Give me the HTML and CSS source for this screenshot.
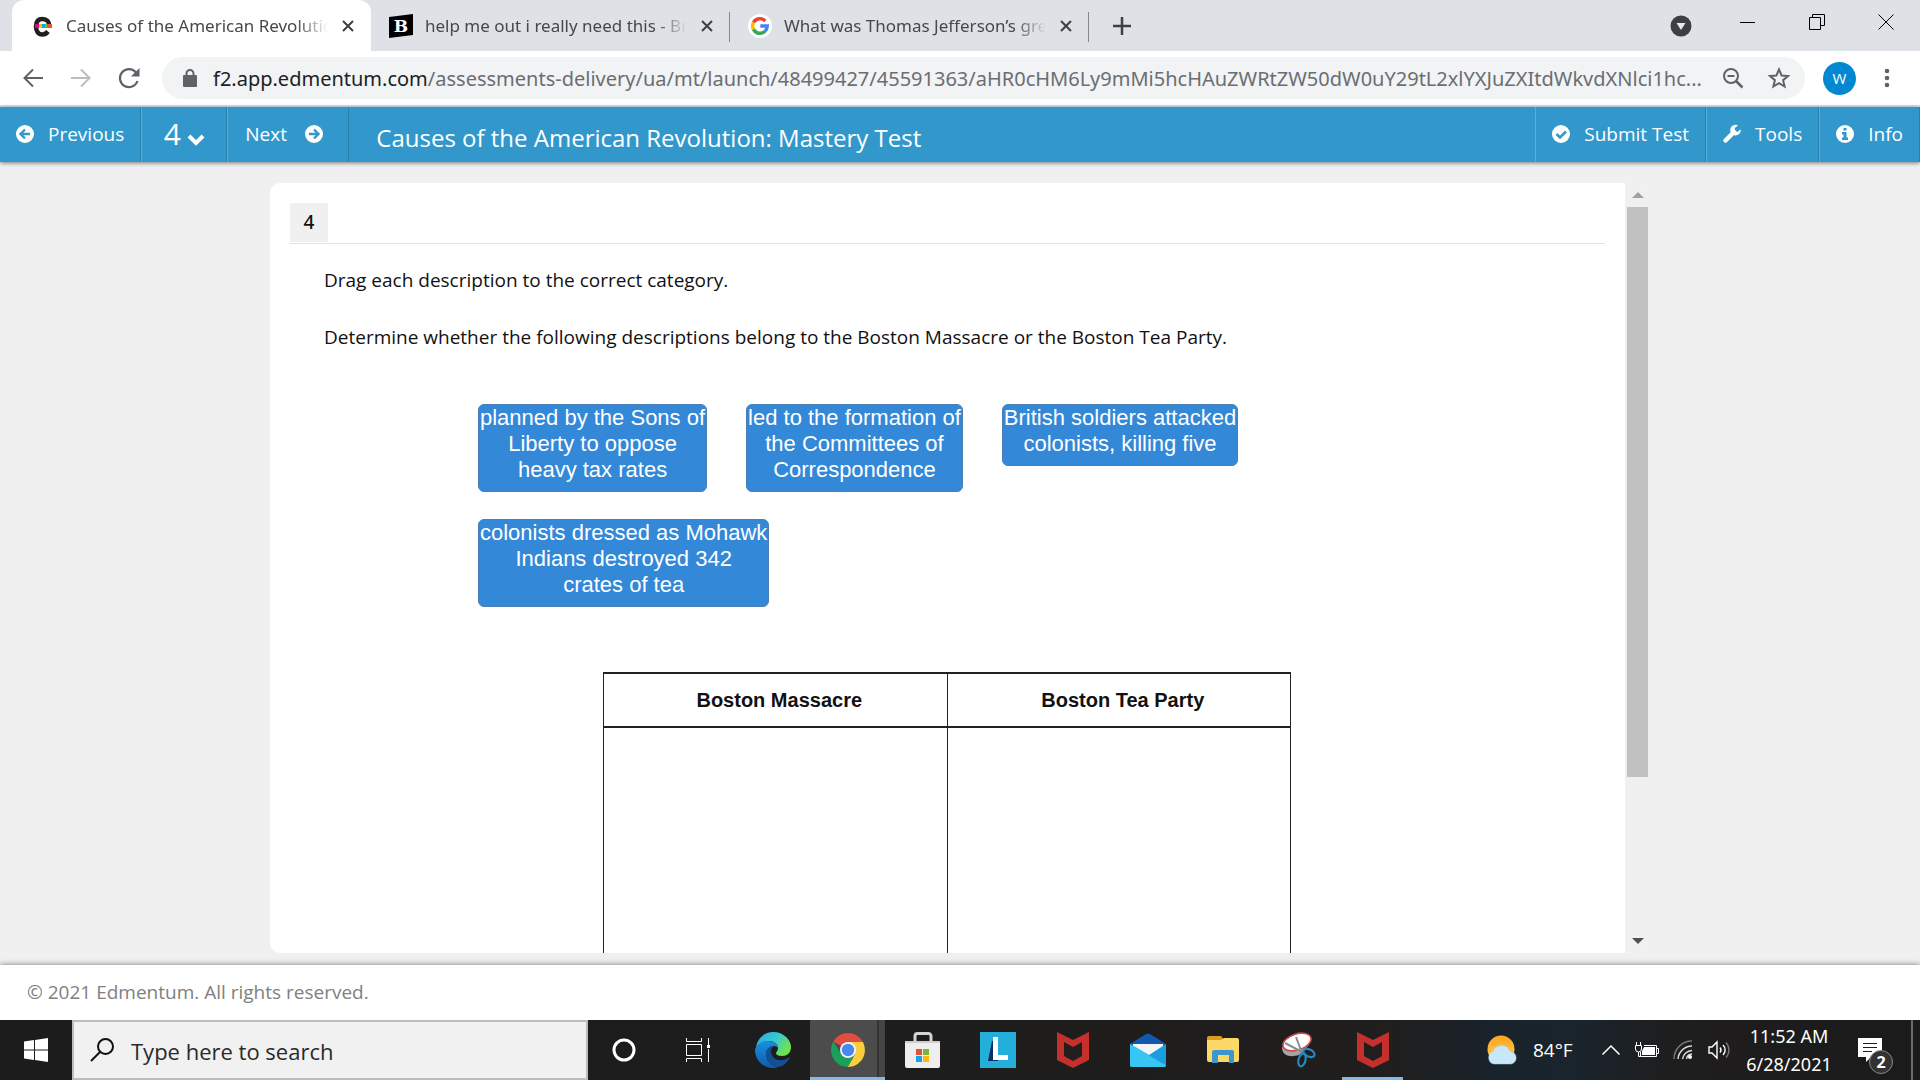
FILE: index.html
```html
<!DOCTYPE html>
<html lang="en">
<head>
<meta charset="utf-8">
<title>Causes of the American Revolution: Mastery Test</title>
<link rel="stylesheet" href="styles.css">
</head>
<body>
<svg class="defs" aria-hidden="true">
  <symbol id="x" viewBox="0 0 14 14"><path d="M2 2l10 10M12 2L2 12" fill="none" stroke="#3c4043" stroke-width="2"/></symbol>
  <symbol id="shield" viewBox="0 0 32 36"><path fill="#c6302c" d="M0 0l16 8L32 0v28l-16 8L0 28z"/><path fill="#221e1e" d="M7 10l9 5 9-5v14l-9 5-9-5z"/></symbol>
</svg>

<div class="tabs">
  <div class="tab active">
    <svg class="fav" viewBox="0 0 24 24"><path d="M18 17.500C16 20 14 20.500 12.500 20.500 8 20.500 6 17 6 12.500S8 5 12.500 5s6.500 3 6.500 6" fill="none" stroke="#231f20" stroke-width="4.500"/><path fill="#e6007e" d="M5 10h4v4H5z"/><path fill="#ffc20e" d="M9 10h3v4H9z"/><path fill="#00a9e0" d="M12 10h3v4h-3z"/><path fill="#76b82a" d="M15 10h2v4h-2z"/><path fill="#f04e37" d="M17 10h5v4h-5z"/></svg>
    <span class="tab-title">Causes of the American Revolution</span>
    <button class="close" aria-label="Close tab"><svg><use href="#x"/></svg></button>
  </div>
  <div class="tab">
    <svg class="fav" viewBox="0 0 24 24"><path d="M0 3l24-3v21L0 24z"/><text x="12" y="18" text-anchor="middle" class="fav-b">B</text></svg>
    <span class="tab-title">help me out i really need this - Brainly</span>
    <button class="close" aria-label="Close tab"><svg><use href="#x"/></svg></button>
  </div>
  <div class="tab">
    <svg class="fav" viewBox="0 0 24 24"><circle cx="12" cy="12" r="12" fill="#fff"/><g fill="none" stroke-width="3.400"><path stroke="#ea4335" d="M5.500 8.500A7.300 7.300 0 0 1 17.300 7"/><path stroke="#fbbc05" d="M5.500 15.500a7.300 7.300 0 0 1 0-7"/><path stroke="#34a853" d="M17 17.300A7.300 7.300 0 0 1 5.500 15.400"/><path stroke="#4285f4" d="M12.300 12h7a7.300 7.300 0 0 1-2.400 5.300"/></g></svg>
    <span class="tab-title">What was Thomas Jefferson’s great</span>
    <button class="close" aria-label="Close tab"><svg><use href="#x"/></svg></button>
  </div>
  <button class="new-tab" aria-label="New tab"><svg viewBox="0 0 18 18"><path d="M9 0v18M0 9h18" stroke="#3c4043" stroke-width="2.500"/></svg></button>
  <div class="window-buttons">
    <button aria-label="Search tabs"><svg width="22" height="22" viewBox="0 0 22 22" class="low"><circle cx="11" cy="11" r="10.500" fill="#3c4043"/><path fill="#e8eaed" d="M6.500 8h9L11 15z"/></svg></button>
    <button aria-label="Minimize"><svg width="16" height="16"><path d="M0 8.500h15" stroke="#000"/></svg></button>
    <button aria-label="Restore"><svg width="16" height="16" fill="none" stroke="#000"><path d="M.5 3.500h11v12H.5zM3.500 3V.5h12v11H12"/></svg></button>
    <button aria-label="Close"><svg width="16" height="16"><path d="M.5.5l15 15M15.500.5l-15 15" stroke="#000"/></svg></button>
  </div>
</div>

<div class="toolbar">
  <button class="nav" aria-label="Back"><svg viewBox="0 0 20 20"><path d="M20 10H2M10 1.500L1.500 10l8.500 8.500" fill="none" stroke="#5f6368" stroke-width="2"/></svg></button>
  <button class="nav" aria-label="Forward"><svg viewBox="0 0 20 20"><path d="M0 10h18M10 1.500l8.500 8.500-8.500 8.500" fill="none" stroke="#babcbe" stroke-width="2"/></svg></button>
  <button class="nav" aria-label="Reload"><svg viewBox="0 0 20 20"><path d="M18.500 13A9 9 0 1 1 17 4.500" fill="none" stroke="#5f6368" stroke-width="2.200"/><path fill="#5f6368" d="M20.500 0v8.500H12z"/></svg></button>
  <div class="omnibox">
    <svg width="14" height="18" viewBox="0 0 14 18"><path fill="#5f6368" d="M1 6h12a1 1 0 0 1 1 1v10a1 1 0 0 1-1 1H1a1 1 0 0 1-1-1V7a1 1 0 0 1 1-1z"/><path d="M3.500 7V4.500a3.500 3.500 0 0 1 7 0V7" fill="none" stroke="#5f6368" stroke-width="2"/></svg>
    <span class="url"><b>f2.app.edmentum.com</b>/assessments-delivery/ua/mt/launch/48499427/45591363/aHR0cHM6Ly9mMi5hcHAuZWRtZW50dW0uY29tL2xlYXJuZXItdWkvdXNlci1hc...</span>
    <button aria-label="Zoom"><svg width="22" height="22" fill="none" stroke="#5f6368" stroke-width="2"><circle cx="9" cy="9" r="7"/><path d="M5.500 9h7"/><path d="M14 14l6.500 6.500" stroke-width="2.500"/></svg></button>
    <button aria-label="Bookmark"><svg width="22" height="22" viewBox="0 0 22 22"><path d="M11 2.500l2.600 6 6.400.5-4.900 4.200 1.500 6.300L11 16.200l-5.600 3.300 1.500-6.300L2 9l6.400-.5z" fill="none" stroke="#5f6368" stroke-width="2"/></svg></button>
  </div>
  <button class="avatar">W</button>
  <button class="menu" aria-label="Menu"><svg width="6" height="20" fill="#5f6368"><circle cx="3" cy="3" r="2.300"/><circle cx="3" cy="10" r="2.300"/><circle cx="3" cy="17" r="2.300"/></svg></button>
</div>

<header class="bar">
  <button class="item"><svg class="ic" viewBox="0 0 18 18"><circle cx="9" cy="9" r="9" fill="#fff"/><path d="M14 9H5M9 4.500L4.500 9 9 13.500" fill="none" stroke="#3298cc" stroke-width="2.400"/></svg>Previous</button>
  <button class="item number">4<svg width="18" height="12" viewBox="0 0 18 12"><path d="M2 2l7 7 7-7" fill="none" stroke="#fff" stroke-width="4"/></svg></button>
  <button class="item next">Next<svg class="ic" viewBox="0 0 18 18"><circle cx="9" cy="9" r="9" fill="#fff"/><path d="M4 9h9M9 4.500L13.500 9 9 13.500" fill="none" stroke="#3298cc" stroke-width="2.400"/></svg></button>
  <h1>Causes of the American Revolution: Mastery Test</h1>
  <button class="item"><svg class="ic" viewBox="0 0 18 18"><circle cx="9" cy="9" r="9" fill="#fff"/><path d="M4.500 9l3.500 3.500 6-6" fill="none" stroke="#3298cc" stroke-width="2.600"/></svg>Submit Test</button>
  <button class="item"><svg class="ic" viewBox="0 0 18 18"><path d="M2.500 15.500L11 7" stroke="#fff" stroke-width="4.500" stroke-linecap="round"/><path fill="#fff" d="M15 .5L11.800 3v2.800l2.600 1.200L17.700 4.300A5.300 5.300 0 1 1 15 .5z"/></svg>Tools</button>
  <button class="item"><svg class="ic" viewBox="0 0 18 18"><circle cx="9" cy="9" r="9" fill="#fff"/><path fill="#3298cc" d="M7.500 3h3v2.500h-3zM6 7h4.500v5.500H12V15H6v-2.500h1.500v-3H6z"/></svg>Info</button>
</header>

<main class="stage">
  <div class="card">
    <section class="question">
      <div class="q-head"><span class="q-number">4</span></div>
      <div class="q-text">
        <p>Drag each description to the correct category.</p>
        <p>Determine whether the following descriptions belong to the Boston Massacre or the Boston Tea Party.</p>
      </div>
      <div class="tiles">
        <button class="tile">planned by the Sons of<br>Liberty to oppose<br>heavy tax rates</button>
        <button class="tile">led to the formation of<br>the Committees of<br>Correspondence</button>
        <button class="tile">British soldiers attacked<br>colonists, killing five</button>
        <button class="tile">colonists dressed as Mohawk<br>Indians destroyed 342<br>crates of tea</button>
      </div>
      <table class="categories">
        <thead><tr><th scope="col">Boston Massacre</th><th scope="col">Boston Tea Party</th></tr></thead>
        <tbody><tr><td></td><td></td></tr></tbody>
      </table>
    </section>
    <div class="scrollbar">
      <svg width="12" height="6"><path fill="#a0a0a0" d="M0 6l6-6 6 6z"/></svg>
      <div class="track"><div class="thumb"></div></div>
      <svg width="12" height="6"><path fill="#505050" d="M0 0h12L6 6z"/></svg>
    </div>
  </div>
</main>

<footer class="foot">© 2021 Edmentum. All rights reserved.</footer>

<div class="taskbar">
  <button class="start" aria-label="Start"><svg width="24" height="24" fill="#fff"><path d="M0 3.500l10-1.400v9.400H0zM11 2l13-2v11.500H11zM0 12.500h10v9.400L0 20.500zM11 12.500h13V24l-13-2z"/></svg></button>
  <label class="search">
    <svg width="24" height="24" fill="none" stroke="#111" stroke-width="2"><circle cx="15.500" cy="8.500" r="7.500"/><path d="M10 14L1 23"/></svg>
    <input type="text" placeholder="Type here to search" aria-label="Type here to search">
  </label>
  <button class="app narrow" aria-label="Cortana"><svg width="24" height="24"><circle cx="12" cy="12" r="10" fill="none" stroke="#fff" stroke-width="3"/></svg></button>
  <button class="app" aria-label="Task view"><svg width="26" height="24" fill="none" stroke="#fff"><path d="M1.500 6.500h15v11h-15zM1.500 0v3.500h15V0M1.500 24v-3.500h15V24M23.500 0v7M23.500 11v13"/><path d="M22 7h3v3h-3z" fill="#fff" stroke="none"/></svg></button>
  <button class="app" aria-label="Edge"><svg width="36" height="36" viewBox="0 0 36 36"><defs><linearGradient id="eg" x1="0" y1="0" x2="1" y2=".5"><stop offset="0" stop-color="#2aa9dd"/><stop offset=".55" stop-color="#35c8d5"/><stop offset="1" stop-color="#6fe34e"/></linearGradient><linearGradient id="eb" x1="0" y1="0" x2="0" y2="1"><stop offset="0" stop-color="#1d8fe0"/><stop offset="1" stop-color="#0d5cab"/></linearGradient></defs><path fill="url(#eg)" d="M1 16C2 6 10 0 18 0c11 0 18 8 18 15 0 6-4 9-9 9-4 0-6-1-6-3 0-1 2-2 2-5 0-4-4-7-9-7C8 9 3 12 1 16z"/><path fill="url(#eb)" d="M0 18C1 12 7 9 13 9c6 0 10 3 10 7 0-1-2-2-4-2-6 0-9 6-7 11 1 6 6 10 11 10-2 1-4 1-5 1C8 36 0 28 0 18z"/><path fill="#134f94" d="M19 14c-4 3-4 8 0 12 4 3 10 3 14 0 2-1 2 0 1 1-3 5-7 8-12 8-6-1-10-5-11-10-1-6 3-11 8-11z"/></svg></button>
  <button class="app open current" aria-label="Chrome"><svg width="34" height="34" viewBox="0 0 34 34"><path fill="#e14b40" d="M17 17L2.300 8.500A17 17 0 0 1 31.700 8.500L32 10H17z"/><path fill="#fccd3c" d="M17 9h14.900A17 17 0 0 1 16.500 34l7.500-13z"/><path fill="#1aa05a" d="M2.300 8.500L11 22l6 3h5l-5.200 9A17 17 0 0 1 2.300 8.500z"/><circle cx="17" cy="17" r="8" fill="#f3f6fb"/><circle cx="17" cy="17" r="6.200" fill="#4a87ee"/></svg></button>
  <button class="app" aria-label="Store"><svg width="36" height="36" viewBox="0 0 36 36"><path d="M10 10V4a2.500 2.500 0 0 1 2.500-2.500h11A2.500 2.500 0 0 1 26 4v6" fill="none" stroke="#d4d4d4" stroke-width="3"/><path fill="#eee" d="M0 9h35v25a2 2 0 0 1-2 2H2a2 2 0 0 1-2-2z"/><path fill="#cfcfcf" d="M0 9h35v2H0z"/><path fill="#e5502e" d="M11 17h6v6h-6z"/><path fill="#7fb239" d="M18 17h6v6h-6z"/><path fill="#16a3e6" d="M11 24h6v6h-6z"/><path fill="#fdb813" d="M18 24h6v6h-6z"/></svg></button>
  <button class="app" aria-label="Lenovo Vantage"><svg width="36" height="36"><path fill="#24afdb" d="M0 0h36v36H0z"/><path fill="#0b2f63" d="M12 9l-4 20h10V9z"/><path fill="#fff" d="M13 5h5v18h10v5H13z"/></svg></button>
  <button class="app" aria-label="McAfee"><svg width="32" height="36"><use href="#shield"/></svg></button>
  <button class="app" aria-label="Mail"><svg width="36" height="34"><path fill="#1059ae" d="M0 11L16 1q2-1 4 0l16 10v8H0z"/><path fill="#f4f5fb" d="M3 11h30v8L18 24 3 19z"/><path fill="#1b9de2" d="M0 11v21a2 2 0 0 0 2 2h32a2 2 0 0 0 2-2V11L19 22z"/><path fill="#37c5f3" d="M0 11l36 21.500q-.5 1.500-2 1.500H2a2 2 0 0 1-2-2z"/></svg></button>
  <button class="app" aria-label="File Explorer"><svg width="32" height="28"><path fill="#d6a01c" d="M0 2a2 2 0 0 1 2-2h12l3 4H0z"/><path fill="#fcd866" d="M0 4h14l3-2h13a2 2 0 0 1 2 2v20a2 2 0 0 1-2 2H2a2 2 0 0 1-2-2z"/><path fill="#3d97cf" d="M5 27V16a2 2 0 0 1 2-2h18a2 2 0 0 1 2 2v11h-5v-8H11v8z"/></svg></button>
  <button class="app" aria-label="Snipping Tool"><svg width="34" height="36" viewBox="0 0 34 36"><path fill="#a5a5a8" d="M1 15c0 8 6 11 17 8l10-10z"/><ellipse cx="16" cy="10" rx="14.500" ry="8" transform="rotate(-18 16 10)" fill="#fff" stroke="#c94b50" stroke-width="1.600"/><path d="M15 5l6 16M4 11l17 9" stroke="#888e94" stroke-width="2"/><g fill="none" stroke="#2489bd" stroke-width="2.200"><ellipse cx="28" cy="21" rx="6" ry="3.500" transform="rotate(25 28 21)"/><ellipse cx="21" cy="28" rx="3.500" ry="6.500" transform="rotate(15 21 28)"/></g></svg></button>
  <button class="app open" aria-label="McAfee window"><svg width="32" height="36"><use href="#shield"/></svg></button>
  <div class="tray">
    <button class="weather"><svg width="30" height="30" viewBox="0 0 30 30"><defs><linearGradient id="sun" x1="0" y1="0" x2="0" y2="1"><stop offset="0" stop-color="#ffa31c"/><stop offset="1" stop-color="#ffd15a"/></linearGradient></defs><circle cx="14" cy="14" r="13.500" fill="url(#sun)"/><path fill="#c8e7f8" stroke="#a5cfe8" stroke-width=".5" d="M7 29a6.500 6.500 0 0 1-1-12.500 9 9 0 0 1 17 0A6.300 6.300 0 0 1 24 29z"/></svg>84°F</button>
    <button aria-label="Show hidden icons"><svg width="18" height="10"><path d="M.5 9.500L9 1l8.500 8.500" fill="none" stroke="#fff" stroke-width="1.500"/></svg></button>
    <button aria-label="Battery"><svg width="24" height="16"><path fill="none" stroke="#fff" d="M9 3.500h12.500v11h-16V10M22 6.500h1.500v5H22"/><path fill="#fff" d="M9 5h11v8H7V9z"/><path d="M1.500 0v3M5.500 0v3M.5 3.500h6V7a3 3 0 0 1-6 0zM3.500 10v4.500h2" fill="none" stroke="#fff"/></svg></button>
    <button aria-label="Network"><svg width="20" height="20" fill="none" stroke-width="1.500"><path stroke="#777" d="M1 19A18 18 0 0 1 19 1"/><path stroke="#ddd" d="M5 19A14 14 0 0 1 19 6M9.500 19A10 10 0 0 1 19 10.500M13.500 19a6 6 0 0 1 5.500-5"/><circle cx="17" cy="17" r="2" fill="#fff"/></svg></button>
    <button aria-label="Volume"><svg width="22" height="18" fill="none" stroke="#fff" stroke-width="1.400"><path d="M1 6h3l5-5v16l-5-5H1zM12 6.500a4 4 0 0 1 0 5M15 4a7 7 0 0 1 0 10"/><path stroke="#777" d="M18 1.500a11 11 0 0 1 0 15"/></svg></button>
    <button class="clock"><span>11:52 AM</span><span>6/28/2021</span></button>
    <button class="notes" aria-label="Notifications, 2 new"><svg width="24" height="24"><path fill="#fff" d="M0 0h24v19H13l-5 5v-5H0z"/><path d="M5 5.500h14M5 9.500h14M5 13.500h9" stroke="#1d1d1d"/></svg><span class="count">2</span></button>
  </div>
</div>
</body>
</html>
```
FILE: styles.css
```css
* { box-sizing: border-box; }
body {
  margin: 0;
  height: 100vh;
  display: flex;
  flex-direction: column;
  overflow: hidden;
  background: #f0f0f0;
  font-family: "Open Sans", "Noto Sans", sans-serif;
  font-size: 19px;
  color: #111;
}
button {
  margin: 0;
  padding: 0;
  border: 0;
  background: none;
  color: inherit;
  font: inherit;
  display: flex;
  align-items: center;
  justify-content: center;
}
svg { display: block; flex: none; overflow: visible; }
.defs { position: absolute; width: 0; height: 0; }

/* Browser tabs */
.tabs { display: flex; flex: none; height: 51px; background: #dee1e6; padding-left: 12px; }
.tab {
  display: flex;
  align-items: center;
  width: 359px;
  padding: 0 16px 0 18px;
  font-family: "Noto Sans", sans-serif;
  font-size: 17px;
  color: #45494d;
}
.tab.active { background: #fff; border-radius: 12px 12px 0 0; }
.tab:not(.active) { background: linear-gradient(#85888c, #85888c) right 12px / 1px 30px no-repeat; }
.fav { width: 24px; height: 24px; margin-right: 12px; }
.fav-b { font: bold 17px "DejaVu Serif", serif; fill: #fff; }
.tab-title {
  flex: 1;
  min-width: 0;
  overflow: hidden;
  white-space: nowrap;
  -webkit-mask-image: linear-gradient(to right, #000 88%, transparent);
  mask-image: linear-gradient(to right, #000 88%, transparent);
}
.close { width: 14px; height: 14px; margin-left: 13px; }
.close svg { width: 14px; height: 14px; }
.new-tab { width: 66px; }
.new-tab svg { width: 18px; height: 18px; }
.window-buttons { display: flex; margin-left: auto; height: 43px; }
.window-buttons button { width: 69px; }
.window-buttons .low { margin: 8px 0 0 4px; }

/* Address bar */
.toolbar {
  display: flex;
  flex: none;
  align-items: center;
  height: 56px;
  padding: 0 9px 0 9px;
  background: #fff;
  border-bottom: 2px solid #cfe3ef;
}
.nav { width: 48px; height: 40px; }
.nav svg { width: 20px; height: 20px; }
.omnibox {
  flex: 1;
  min-width: 0;
  display: flex;
  align-items: center;
  gap: 15px;
  height: 42px;
  margin-left: 9px;
  padding: 0 11px 0 21px;
  border-radius: 21px;
  background: #f1f3f4;
}
.url {
  flex: 1;
  min-width: 0;
  overflow: hidden;
  white-space: nowrap;
  padding-left: 1px;
  font-family: "Noto Sans", sans-serif;
  font-size: 20px;
  color: #6a6e72;
}
.url b { font-weight: 400; color: #202124; }
.omnibox button { width: 31px; }
.avatar {
  width: 33px;
  height: 33px;
  margin-left: 18px;
  border-radius: 50%;
  background: #0288d1;
  color: #fff;
  font-size: 15px;
}
.menu { width: 48px; margin-left: 7px; }

/* Test header */
.bar {
  display: flex;
  flex: none;
  height: 55px;
  background: #3298cc;
  color: #fff;
  box-shadow: 0 1px 4px rgba(0, 0, 0, .5);
  position: relative;
}
.item { gap: 14px; padding: 0 16px 2px; border-right: 1px solid #2a7fab; }
.item + .item { border-left: 1px solid #56aeda; }
.ic { width: 18px; height: 18px; }
.number { font-size: 30px; gap: 6px; width: 86px; }
.number svg { margin-top: 12px; }
.next { gap: 18px; width: 122px; padding: 0 0 2px 17px; justify-content: flex-start; }
.bar h1 {
  flex: 1;
  margin: 0;
  padding-left: 27px;
  font-size: 24px;
  font-weight: 400;
  line-height: 62px;
  white-space: nowrap;
}
.bar h1 + .item { border-left: 1px solid #56aeda; }

/* Question */
.stage { flex: 1; min-height: 0; padding: 21px 272px 12px 270px; display: flex; }
.card { flex: 1; display: flex; border-radius: 10px; overflow: hidden; background: #fff; }
.question { flex: 1; min-width: 0; padding: 20px 20px 0; }
.q-head { border-bottom: 1px solid #e2e2e2; padding-bottom: 1px; }
.q-number {
  display: block;
  width: 38px;
  line-height: 38px;
  padding-bottom: 1px;
  background: #f0f0f0;
  text-align: center;
  font-family: "Noto Sans", sans-serif;
  font-weight: 500;
}
.q-text { padding: 22px 34px 24px; line-height: 28px; }
.q-text p { margin: 0 0 29px; }
.tiles {
  display: flex;
  flex-wrap: wrap;
  align-items: flex-start;
  gap: 27px 39px;
  max-width: 1010px;
  padding-left: 188px;
}
.tile {
  padding: 0 1px 8px;
  border: 1px solid #4b7fb3;
  border-radius: 6px;
  background: #3388d8;
  color: #fff;
  font: 22px/26px "Liberation Sans", sans-serif;
  text-align: center;
}
.categories {
  width: 688px;
  margin: 65px auto 0 313px;
  border-collapse: collapse;
  table-layout: fixed;
}
.categories th, .categories td { border: solid #222; border-width: 2px 1px; }
.categories th { height: 54px; padding: 0 0 0 8px; font: bold 20px "Liberation Sans", sans-serif; }
.categories td { height: 400px; }
.scrollbar {
  display: flex;
  flex-direction: column;
  align-items: center;
  width: 23px;
  padding: 9px 0 9px 2px;
  background: #f0f0f0;
}
.track { flex: 1; align-self: stretch; padding: 9px 0; }
.thumb { height: 79%; background: #c1c1c1; }

.foot {
  flex: none;
  padding-left: 27px;
  line-height: 55px;
  background: #fff;
  color: #808080;
  box-shadow: 0 0 6px rgba(0, 0, 0, .5);
  position: relative;
}

/* Taskbar */
.taskbar {
  display: flex;
  flex: none;
  height: 60px;
  position: relative;
  background: linear-gradient(90deg, #1c1c1c, #1e1d1c 55%, #211e1e 72%, #18232b 78%, #1a242c 82%, #1f1d1d 88%, #1b1b1b);
  color: #fff;
}
.start { width: 72px; }
.search {
  display: flex;
  align-items: center;
  gap: 17px;
  width: 516px;
  padding-left: 16px;
  border: 2px solid #bdbdbd;
  background: #f1f1f1;
}
.search input {
  flex: 1;
  min-width: 0;
  border: 0;
  padding: 2px 0 0;
  background: none;
  font: 22px "Open Sans", sans-serif;
}
.search input::placeholder { color: #2a2a2a; opacity: 1; }
.app { width: 75px; }
.app.narrow { width: 72px; }
.app.open { background: linear-gradient(#86b8e4, #86b8e4) center bottom / 61px 3px no-repeat; }
.app.open.current { background: linear-gradient(#86b8e4, #86b8e4) bottom / 100% 3px no-repeat, linear-gradient(90deg, #4c4c4c 67px, #333 67px, #333 69px, #454545 69px); }
.tray { display: flex; margin-left: auto; padding-right: 7px; }
.tray button { width: 36px; }
.tray .weather { width: 110px; gap: 16px; padding-left: 4px; justify-content: flex-start; }
.tray .clock { flex-direction: column; width: 104px; font: 18px/28px "Noto Sans", sans-serif; }
.tray .notes { position: relative; width: 72px; padding-right: 12px; border-right: 2px solid #6a6a6a; }
.count {
  position: absolute;
  left: 28px;
  top: 30px;
  width: 24px;
  height: 24px;
  border: 1px solid #888;
  border-radius: 50%;
  background: #333;
  font-size: 16px;
  font-weight: 700;
  line-height: 22px;
  text-align: center;
}
```
